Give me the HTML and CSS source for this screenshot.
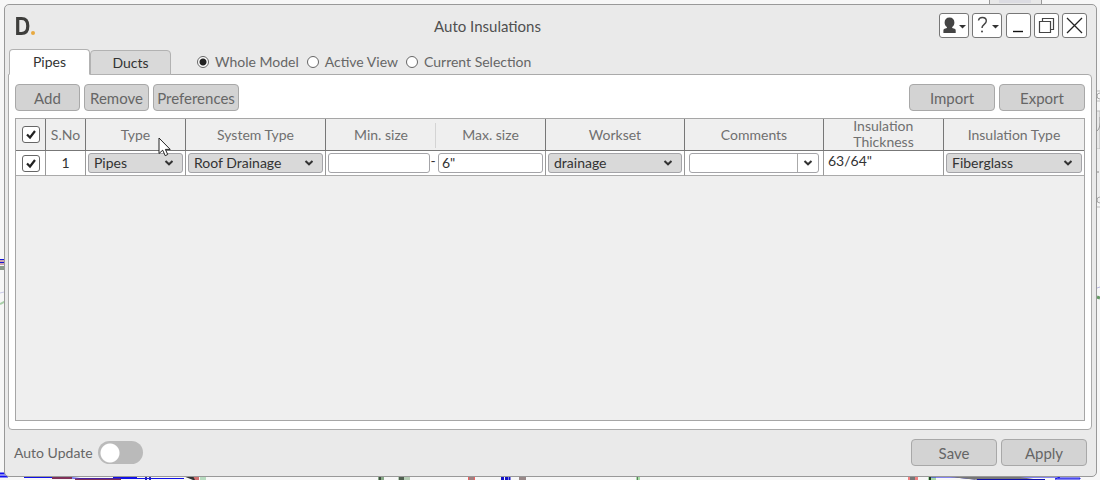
FILE: index.html
```html
<!DOCTYPE html>
<html lang="en">
<head>
<meta charset="utf-8">
<title>Auto Insulations</title>
<link rel="stylesheet" href="styles.css">
</head>
<body>
<svg class="model model-left" width="8" height="480" viewBox="0 0 8 480" aria-hidden="true">
  <path d="M0 259.500h8M0 262.500h8" stroke="#1414d8"/><path d="M0 261h8M0 264h8" stroke="#a05068"/><path d="M0 268h8" stroke="#8a9a8a" stroke-width="4"/>
  <path d="M0 293l8-2" stroke="#c8c8e8"/><path d="M0 304l8-4" stroke="#a8cfa8" stroke-width="2"/>
  <path d="M0 473.500h8M0 476.500h8" stroke="#1010f0" stroke-width="2"/>
</svg>
<svg class="model model-right" width="12" height="480" viewBox="0 0 12 480" aria-hidden="true">
  <path d="M8 91h4M8 101h4M8 207h4" stroke="#bbb"/><circle cx="12" cy="96" r="3" fill="none" stroke="#aaa"/>
  <path d="M9 111h3v38h-3" fill="#e9e9e9" stroke="#bbb"/><path d="M9 131q4-3 3-14" fill="none" stroke="#999"/>
  <path d="M9 149h3v54h-3z" fill="#eee"/><path d="M9 172h2" stroke="#888"/><circle cx="12" cy="200" r="3" fill="none" stroke="#aaa"/>
  <path d="M9 288l3-1" stroke="#b8b8e0"/><path d="M9 297l3 1" stroke="#669966" stroke-width="3"/>
</svg>
<svg class="model model-top" width="54" height="6" viewBox="0 0 54 6" aria-hidden="true">
  <path d="M0 0h52v6H0z" fill="#e8e8e8"/><path d="M10 0h32v3H10z" fill="#dcdce2"/><path d="M.5 0v6M52.500 0v6" stroke="#999"/>
</svg>
<svg class="model model-bottom" width="1100" height="6" viewBox="0 0 1100 6" aria-hidden="true">
  <path d="M24 3.500h42l14 1h104M113 3.500h24" fill="none" stroke="#1010e8"/><path d="M52 4h20M75 5.500h46" stroke="#803058" stroke-width="2"/>
  <path d="M146 1v5M150 1v5" stroke="#2020c0" stroke-width="2"/><path d="M183 2l10 4h6l-6-4z" fill="#333"/><path d="M193 2h6v4h-4z" fill="#d07070"/><path d="M200 2h6v4h-6z" fill="#b8dcc0"/>
  <path d="M378 2h6v4h-6z" fill="#86a886"/><path d="M379 2h2v4h-2z" fill="#405040"/><path d="M398 2h12v4h-12z" fill="#b4ccb4"/><path d="M399 2h5v4h-5z" fill="#506050"/>
  <path d="M468 2h7v4h-7z" fill="#a08080"/><path d="M468.500 2v4M474.500 2v4" stroke="#f06060"/><path d="M501 2h3v4h-3zM505 3h3v3h-3zM508.500 2h2v4h-2z" fill="#1212c8"/><path d="M519 2h7v4h-7z" fill="#988888"/>
  <path d="M636 2h4v4h-4z" fill="#a8e0a8"/><path d="M637 2h1v4h-1z" fill="#607860"/>
  <path d="M908 2h10v4h-10z" fill="#f08080"/><path d="M910 2h5v4h-5z" fill="#777"/><path d="M928 2h8v4h-8z" fill="#a8d8a8"/><path d="M929 2h2v4h-2z" fill="#204020"/>
  <path d="M931 3h24l20 2M1000 3h60l-5 2h25v-1h-22" fill="none" stroke="#1010e8"/><path d="M950 3h70l20 3h-62z" fill="#777"/><path d="M977 5.500h68" stroke="#1010a8"/>
</svg>

<main class="window">
  <header class="titlebar">
    <svg class="logo" width="22" height="20" viewBox="0 0 22 20" role="img" aria-label="Logo"><path d="M3.700 2.500h3.800q6.300 0 6.300 7.500T7.500 17.500H3.700z" fill="none" stroke="#3e3e3c" stroke-width="3.200"/><circle cx="19" cy="17" r="2" fill="#e8a940"/></svg>
    <h1 class="title">Auto Insulations</h1>
    <div class="window-buttons">
      <button class="icon-button wide" type="button" aria-label="Account"><svg width="28" height="23" viewBox="0 0 28 23"><path d="M9.500 3.500c3.200 0 4.900 2.100 4.900 5 0 2.200-.9 3.600-2.200 4.500v1l2.300.8c1 .4 1.200 1 1.200 2V19H3.400v-2.200c0-1 .3-1.600 1.200-2l2.300-.8v-1c-1.400-.9-2.300-2.300-2.300-4.500 0-2.900 1.700-5 4.900-5z" fill="#444"/><path d="M19 11h7l-3.500 3.500z" fill="#333"/></svg></button>
      <button class="icon-button wide" type="button" aria-label="Help"><svg width="28" height="23" viewBox="0 0 28 23"><path d="M5.500 6.500C5.800 4.500 7.300 3.500 9.300 3.500c2.300 0 4 1.400 4 3.500 0 3.300-4.300 3.500-4.300 7" fill="none" stroke="#444" stroke-width="1.400"/><circle cx="9" cy="17.500" r="1" fill="#444"/><path d="M19 11h7l-3.500 3.500z" fill="#333"/></svg></button>
      <button class="icon-button" type="button" aria-label="Minimize"><svg width="23" height="23" viewBox="0 0 23 23"><path d="M6 17.500h10" stroke="#111" stroke-width="1.400"/></svg></button>
      <button class="icon-button" type="button" aria-label="Restore"><svg width="23" height="23" viewBox="0 0 23 23"><path d="M4.500 7.500h11v11h-11zM7.500 7.500v-3h11v11h-3" fill="none" stroke="#444" stroke-width="1.200"/></svg></button>
      <button class="icon-button" type="button" aria-label="Close"><svg width="23" height="23" viewBox="0 0 23 23"><path d="M4 4l15 15M19 4L4 19" stroke="#222" stroke-width="1.300"/></svg></button>
    </div>
  </header>

  <div class="selector">
    <div class="tabs" role="tablist">
      <button class="tab active" type="button" role="tab" aria-selected="true">Pipes</button>
      <button class="tab" type="button" role="tab" aria-selected="false">Ducts</button>
    </div>
    <div class="scope" role="radiogroup" aria-label="Scope">
      <label class="radio"><input type="radio" name="scope" checked>Whole Model</label>
      <label class="radio"><input type="radio" name="scope">Active View</label>
      <label class="radio"><input type="radio" name="scope">Current Selection</label>
    </div>
  </div>

  <section class="panel">
    <div class="toolbar">
      <button class="button small" type="button">Add</button>
      <button class="button small" type="button">Remove</button>
      <button class="button" type="button">Preferences</button>
      <span class="spacer"></span>
      <button class="button" type="button">Import</button>
      <button class="button" type="button">Export</button>
    </div>
    <div class="grid">
      <table>
        <colgroup><col class="c-check"><col class="c-no"><col class="c-type"><col class="c-system"><col class="c-size"><col class="c-size"><col class="c-set"><col class="c-set"><col class="c-thick"><col class="c-ins"></colgroup>
        <thead>
          <tr>
            <th><input class="check" type="checkbox" aria-label="Select all" checked></th>
            <th>S.No</th><th>Type</th><th>System Type</th>
            <th class="joined">Min. size</th><th>Max. size</th>
            <th>Workset</th><th>Comments</th><th><span class="two-line">Insulation<br>Thickness</span></th><th>Insulation Type</th>
          </tr>
        </thead>
        <tbody>
          <tr>
            <td class="center"><input class="check" type="checkbox" aria-label="Select row 1" checked></td>
            <td class="center">1</td>
            <td><select class="select" aria-label="Type"><option>Pipes</option></select></td>
            <td><select class="select" aria-label="System type"><option>Roof Drainage</option></select></td>
            <td class="joined"><div class="range"><input class="text" type="text" aria-label="Minimum size"><span>-</span></div></td>
            <td><input class="text" type="text" aria-label="Maximum size" value="6&quot;"></td>
            <td><select class="select" aria-label="Workset"><option>drainage</option></select></td>
            <td><div class="combo"><input type="text" aria-label="Comments"><button type="button" aria-label="Show comments"><svg width="10" height="6" viewBox="0 0 10 6"><path d="M1.500 1L5 4.300 8.500 1" fill="none" stroke="#333" stroke-width="2"/></svg></button></div></td>
            <td class="value">63/64"</td>
            <td><select class="select" aria-label="Insulation type"><option>Fiberglass</option></select></td>
          </tr>
        </tbody>
      </table>
    </div>
  </section>

  <footer class="footer">
    <label class="toggle">Auto Update<input type="checkbox" role="switch"></label>
    <span class="spacer"></span>
    <button class="button" type="button">Save</button>
    <button class="button" type="button">Apply</button>
  </footer>
</main>
<svg class="pointer" width="14" height="20" viewBox="0 0 14 20" aria-hidden="true"><path d="M1 1v15.500l3.700-3.300 2.500 5.500 2.500-1.200-2.300-5.100h4.800z" fill="#fff" stroke="#222"/></svg>
</body>
</html>
```
FILE: styles.css
```css
* { box-sizing: border-box; }

body {
  position: relative;
  display: flex;
  min-height: 100vh;
  margin: 0;
  padding: 4px 3px 3px 4px;
  overflow-x: hidden;
  background: #f7f7f7;
  color: #666;
  font: 14px/16px Lato, "Open Sans", sans-serif;
}

button, input, select { margin: 0; font: inherit; color: inherit; }

.model { position: absolute; }
.model-left { top: 0; left: 0; }
.model-right { top: 0; right: 0; }
.model-top { top: 0; right: 57px; }
.model-bottom { bottom: 0; left: 0; }

.window {
  position: relative;
  display: flex;
  flex: 1;
  flex-direction: column;
  min-width: 0;
  padding: 0 4px 0 3px;
  border: 1px solid #999;
  border-radius: 5px;
  background: #eaeaea;
}

.titlebar { display: flex; align-items: center; padding: 8px 5px 0 6px; }
.logo { flex: none; }
.title {
  flex: 1;
  margin: 0;
  text-align: center;
  font-size: 15px;
  font-weight: 400;
  line-height: 20px;
  color: #505050;
}
.window-buttons { display: flex; gap: 3px; }
.icon-button {
  display: grid;
  place-items: center;
  width: 25px;
  height: 25px;
  padding: 0;
  border: 1px solid #777;
  border-radius: 3px;
  background: #fff;
}
.icon-button.wide { width: 30px; }
.icon-button.wide + .icon-button:not(.wide) { margin-left: 1px; }

.selector { display: flex; align-items: flex-end; gap: 26px; margin-top: 11px; padding-left: 1px; }
.tabs { position: relative; z-index: 1; display: flex; align-items: flex-end; margin-bottom: -1px; }
.tab {
  width: 81px;
  height: 25px;
  padding: 0;
  border: 1px solid #b2b2b2;
  border-radius: 4px 4px 0 0;
  background: #d9d9d9;
  color: #333;
}
.tab.active { height: 26px; border-bottom-color: #fff; background: #fff; }
.scope { display: flex; gap: 8px; padding-bottom: 4px; }
.radio { display: flex; align-items: center; gap: 6px; }
.radio input {
  appearance: none;
  width: 12px;
  height: 12px;
  border: 1px solid #666;
  border-radius: 50%;
  background: #fff;
}
.radio input:checked { background: radial-gradient(circle, #222 3px, #fff 4px); }

.panel {
  display: flex;
  flex: 1;
  flex-direction: column;
  gap: 7px;
  padding: 9px 6px 8px;
  border: 1px solid #aaa;
  border-radius: 0 4px 4px 4px;
  background: #fff;
}
.toolbar { display: flex; gap: 4px; }
.spacer { flex: 1; }
.button {
  min-width: 86px;
  height: 27px;
  padding: 0 3px;
  border: 1px solid #a8a8a8;
  border-radius: 4px;
  background: #d3d3d3;
  color: #666;
  font-size: 15px;
}
.button.small { min-width: 65px; }

.grid { flex: 1; border: 1px solid #a6a6a6; background: #efefef; }
table { width: 100%; table-layout: fixed; border-collapse: separate; border-spacing: 0; }
.c-check { width: 30px; }
.c-no { width: 40px; }
.c-type { width: 100px; }
.c-system { width: 140px; }
.c-size { width: 110px; }
.c-set { width: 139px; }
.c-thick { width: 120px; }
.c-ins { width: 140px; }
th, td { padding: 0; border-right: 1px solid #999; }
th { position: relative; height: 32px; border-color: #777; border-bottom: 1px solid #777; font-weight: 400; text-align: center; color: #707070; }
td { height: 25px; padding: 2px; border-bottom: 1px solid #aaa; background: #fff; color: #333; vertical-align: middle; }
th:last-child, td:last-child { border-right: 0; }
.joined { border-right: 0; }
th.joined::after { content: ""; position: absolute; top: 4px; right: 0; bottom: 2px; border-right: 1px solid #d4d4d4; }
.two-line { display: block; width: min-content; margin: -1px auto 0; text-align: left; }
.center { text-align: center; }
td.value { padding: 0 4px 4px; }

.check {
  appearance: none;
  display: block;
  width: 18px;
  height: 17px;
  margin: auto;
  border: 1px solid #666;
  border-radius: 3px;
  background: #fff;
}
.check:checked { background: #fff url("data:image/svg+xml,%3Csvg xmlns='http://www.w3.org/2000/svg' width='12' height='11'%3E%3Cpath d='M2 5.500l3 3 5-6.500' fill='none' stroke='%23222' stroke-width='2.200'/%3E%3C/svg%3E") center no-repeat; }

.select, .text, .combo {
  display: block;
  width: 100%;
  height: 20px;
  border: 1px solid #a4a4a8;
  border-radius: 3px;
  background: #fff;
}
.select {
  appearance: none;
  padding: 0 20px 0 5px;
  background: #d9d9d9 url("data:image/svg+xml,%3Csvg xmlns='http://www.w3.org/2000/svg' width='10' height='6'%3E%3Cpath d='M1.500 1L5 4.300 8.500 1' fill='none' stroke='%23333' stroke-width='2'/%3E%3C/svg%3E") right 8px center no-repeat;
}
.text { min-width: 0; padding: 0 3px 2px; }
.range { display: flex; margin-right: -2px; }
.range span { flex: none; width: 6px; text-align: center; line-height: 16px; }
.combo { display: flex; width: auto; margin: 0 2px; }
.combo input { flex: 1; min-width: 0; padding: 0 4px; border: 0; background: none; }
.combo button { display: grid; place-items: center; width: 21px; padding: 0; border: 0; border-left: 1px solid #aaa; background: none; }

.footer { display: flex; align-items: center; gap: 4px; padding: 9px 5px 10px 6px; }
.toggle { display: flex; align-items: center; gap: 5px; }
.toggle input {
  appearance: none;
  width: 45px;
  height: 23px;
  border-radius: 12px;
  background: radial-gradient(circle at 12px 12px, #fff 9px, #bababa 10px);
}
.toggle input:checked { background: radial-gradient(circle at 33px 12px, #fff 9px, #777 10px); }

.pointer { position: absolute; top: 137px; left: 158px; pointer-events: none; }
```
